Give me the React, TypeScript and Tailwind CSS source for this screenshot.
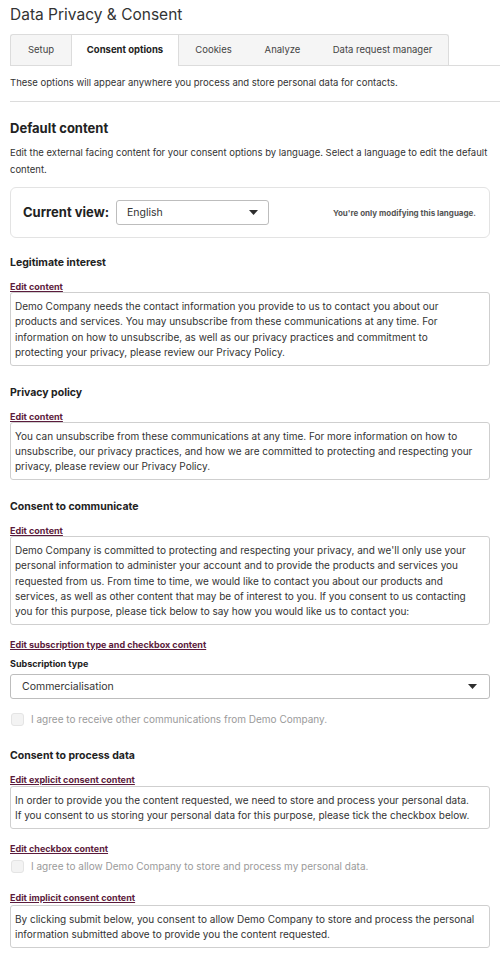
import React from 'react'

const tabs = [
  { label: 'Setup', w: 'w-[61px]', first: true },
  { label: 'Consent options', w: 'w-[108px]', active: true },
  { label: 'Cookies', w: 'w-[69px]' },
  { label: 'Analyze', w: 'w-[69px]' },
  { label: 'Data request manager', w: 'w-[132px]', last: true },
]

function Caret() {
  return (
    <svg width="9" height="5" viewBox="0 0 9 5" className="shrink-0">
      <path d="M0 0 L9 0 L4.5 5 Z" fill="#2e2e2e" />
    </svg>
  )
}

function Heading({ children, mt = 'mt-[18px]' }: { children: React.ReactNode; mt?: string }) {
  return <div className={`${mt} h-[18px] leading-[18px] text-[10.5px] font-bold text-[#222]`}>{children}</div>
}

function EditLink({ children, mt = 'mt-[5px]' }: { children: React.ReactNode; mt?: string }) {
  return (
    <div className={`${mt} h-[14px] leading-[14px]`}>
      <a className="text-[9px] font-bold text-[#5b1b3c] underline underline-offset-[1px] cursor-pointer">{children}</a>
    </div>
  )
}

function TextBox({ children, mt = 'mt-[1px]' }: { children: React.ReactNode; mt?: string }) {
  return (
    <div className={`${mt} border border-[#cfcfcf] rounded-[3px] pl-[4px] pr-[14px] pt-[6px] pb-[4px] text-[10px] leading-[15.4px] text-[#333]`}>
      {children}
    </div>
  )
}

function Check({ label, mt }: { label: string; mt: string }) {
  return (
    <div className={`${mt} h-[16px] flex items-center gap-[7px] pl-[1px]`}>
      <span className="w-[13px] h-[13px] rounded-[3px] border border-[#e4e4e4] bg-[#f3f3f3]" />
      <span className="text-[10px] text-[#9a9a9a]">{label}</span>
    </div>
  )
}

export default function App() {
  return (
    <div className="w-[500px] min-h-[957px] bg-white text-[#333] font-['Inter',sans-serif]">
      <div className="h-[30px] leading-[30px] px-[10px] text-[15.5px] text-[#333]">Data Privacy &amp; Consent</div>

      <div className="mt-[4px] ml-[10px] flex border-b border-[#dcdcdc] h-[32px]">
        {tabs.map((t) => (
          <div
            key={t.label}
            className={`${t.w} flex items-center justify-center text-[9.5px] border-t border-[#dcdcdc] ${
              t.first ? 'border-l rounded-tl-[3px]' : ''
            } ${t.last ? 'border-r rounded-tr-[3px]' : ''} ${
              t.active
                ? 'bg-white font-bold text-[#222] border-l border-r -mb-px h-[32px]'
                : 'bg-[#f5f5f5] text-[#444]'
            }`}
          >
            {t.label}
          </div>
        ))}
      </div>

      <div className="mt-[8px] px-[10px] leading-[18px] text-[9.5px] text-[#333]">
        These options will appear anywhere you process and store personal data for contacts.
      </div>
      <div className="mt-[9px] ml-[10px] border-t border-[#dcdcdc]" />

      <div className="px-[10px]">
        <div className="mt-[16px] h-[20px] leading-[20px] text-[13px] font-bold text-[#222]">Default content</div>
        <div className="mt-[6px] text-[9.5px] leading-[17px] text-[#333]">
          Edit the external facing content for your consent options by language. Select a language to edit the default
          content.
        </div>

        <div className="mt-[9px] border border-[#e3e3e3] rounded-[6px] pl-[12px] pr-[13px] py-[12px] flex items-center">
          <span className="text-[13px] font-bold text-[#222]">Current view:</span>
          <div className="ml-[7px] w-[153px] h-[25px] border border-[#bdbdbd] rounded-[3px] flex items-center justify-between pl-[10px] pr-[10px]">
            <span className="text-[10.5px] text-[#333]">English</span>
            <Caret />
          </div>
          <span className="ml-auto text-[8px] font-bold text-[#555]">You&apos;re only modifying this language.</span>
        </div>

        <Heading mt="mt-[16px]">Legitimate interest</Heading>
        <EditLink>Edit content</EditLink>
        <TextBox>
          Demo Company needs the contact information you provide to us to contact you about our products and services.
          You may unsubscribe from these communications at any time. For information on how to unsubscribe, as well as
          our privacy practices and commitment to protecting your privacy, please review our Privacy Policy.
        </TextBox>

        <Heading>Privacy policy</Heading>
        <EditLink>Edit content</EditLink>
        <TextBox>
          You can unsubscribe from these communications at any time. For more information on how to unsubscribe, our
          privacy practices, and how we are committed to protecting and respecting your privacy, please review our
          Privacy Policy.
        </TextBox>

        <Heading>Consent to communicate</Heading>
        <EditLink>Edit content</EditLink>
        <TextBox>
          Demo Company is committed to protecting and respecting your privacy, and we&apos;ll only use your personal
          information to administer your account and to provide the products and services you requested from us. From
          time to time, we would like to contact you about our products and services, as well as other content that may
          be of interest to you. If you consent to us contacting you for this purpose, please tick below to say how you
          would like us to contact you:
        </TextBox>

        <EditLink mt="mt-[10px]">Edit subscription type and checkbox content</EditLink>
        <div className="mt-[8px] h-[14px] leading-[14px] text-[9px] font-bold text-[#222]">Subscription type</div>
        <div className="mt-[3px] h-[25px] border border-[#bdbdbd] rounded-[3px] flex items-center justify-between pl-[11px] pr-[12px]">
          <span className="text-[10.5px] text-[#333]">Commercialisation</span>
          <Caret />
        </div>
        <Check mt="mt-[13px]" label="I agree to receive other communications from Demo Company." />

        <Heading mt="mt-[19px]">Consent to process data</Heading>
        <EditLink>Edit explicit consent content</EditLink>
        <TextBox mt="mt-[2px]">
          In order to provide you the content requested, we need to store and process your personal data. If you
          consent to us storing your personal data for this purpose, please tick the checkbox below.
        </TextBox>

        <EditLink mt="mt-[10px]">Edit checkbox content</EditLink>
        <Check mt="mt-[6px]" label="I agree to allow Demo Company to store and process my personal data." />

        <EditLink mt="mt-[13px]">Edit implicit consent content</EditLink>
        <TextBox mt="mt-[3px]">
          By clicking submit below, you consent to allow Demo Company to store and process the personal information
          submitted above to provide you the content requested.
        </TextBox>
      </div>
    </div>
  )
}
